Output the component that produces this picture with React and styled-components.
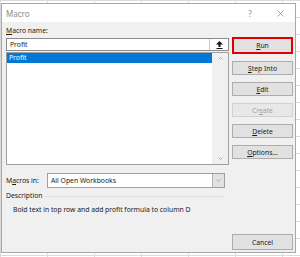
import React from 'react';
import styled, { createGlobalStyle } from 'styled-components';

const GlobalStyle = createGlobalStyle`
  html, body {
    margin: 0;
    padding: 0;
  }
  body {
    width: 300px;
    height: 257px;
    overflow: hidden;
    background-color: #fff;
    background-image:
      linear-gradient(to right, #dadada 1px, transparent 1px),
      linear-gradient(#dadada 1px, transparent 1px);
    background-size: 47px 100%, 100% 17px;
    font-family: "Noto Sans", "Open Sans", sans-serif;
    font-size: 6.8px;
    color: #1a1a1a;
  }
`;

const Page = styled.div`
  padding: 3px 4px 4px 1px;
`;

const Dialog = styled.div`
  width: 295px;
  height: 250px;
  box-sizing: border-box;
  border: 1px solid #a8a8a8;
  background: #f0f0f0;
  display: flex;
  flex-direction: column;
`;

const TitleBar = styled.div`
  height: 18px;
  flex: none;
  background: #fff;
  display: flex;
  align-items: center;
  padding-left: 4px;
`;

const Title = styled.span`
  flex: 1;
  font-size: 8px;
  color: #8c8c8c;
`;

const TitleButton = styled.span`
  width: 30px;
  height: 18px;
  display: flex;
  align-items: center;
  justify-content: center;
  color: #8c8c8c;
  font-size: 8px;
`;

const Content = styled.div`
  flex: 1;
  display: grid;
  grid-template-columns: 223px 61px;
  column-gap: 3px;
  padding: 4px 2px 2px 4px;
`;

const LeftCol = styled.div`
  display: flex;
  flex-direction: column;
`;

const RightCol = styled.div`
  display: flex;
  flex-direction: column;
`;

const Label = styled.div`
  line-height: 10px;
  white-space: nowrap;
`;

const NameBox = styled.div`
  margin-top: 2px;
  height: 13px;
  box-sizing: border-box;
  border: 1px solid #8c8c8c;
  background: #fff;
  display: flex;
`;

const NameText = styled.div`
  flex: 1;
  padding-left: 3px;
  line-height: 11px;
`;

const IconButton = styled.div`
  width: 18px;
  border-left: 1px solid #c8c8c8;
  display: flex;
  align-items: center;
  justify-content: center;
`;

const ListBox = styled.div`
  margin-top: 1px;
  height: 113px;
  box-sizing: border-box;
  border: 1px solid #a0a0a0;
  background: #fff;
  display: flex;
`;

const Items = styled.div`
  flex: 1;
`;

const Item = styled.div`
  height: 10px;
  line-height: 10px;
  padding-left: 2px;
  background: ${(p) => (p.selected ? '#0078d7' : 'transparent')};
  color: ${(p) => (p.selected ? '#fff' : '#000')};
`;

const ScrollBar = styled.div`
  width: 16px;
  background: #f0f0f0;
  display: flex;
  flex-direction: column;
  justify-content: space-between;
  align-items: center;
  padding: 4px 0;
`;

const MacrosRow = styled.div`
  margin-top: 8px;
  display: flex;
  align-items: center;
`;

const RowLabel = styled(Label)`
  width: 41px;
`;

const Select = styled.div`
  width: 178px;
  height: 15px;
  box-sizing: border-box;
  border: 1px solid #a0a0a0;
  background: #fff;
  display: flex;
`;

const SelectText = styled.div`
  flex: 1;
  padding-left: 3px;
  line-height: 13px;
`;

const SelectArrow = styled.div`
  width: 11px;
  background: #e1e1e1;
  border-left: 1px solid #b4b4b4;
  display: flex;
  align-items: center;
  justify-content: center;
`;

const GroupHeader = styled.div`
  margin-top: 3px;
  margin-right: 5px;
  display: flex;
  align-items: center;
  gap: 2px;

  &::after {
    content: '';
    flex: 1;
    border-top: 1px solid #dcdcdc;
  }
`;

const DescText = styled.div`
  margin-top: 4px;
  padding-left: 7px;
  line-height: 10px;
`;

const Button = styled.div`
  height: ${(p) => (p.highlight ? '17px' : '14px')};
  margin-top: ${(p) => (p.highlight ? '11px' : '7px')};
  box-sizing: border-box;
  border: ${(p) => (p.highlight ? '2px solid #e00000' : '1px solid #adadad')};
  background: #e1e1e1;
  display: flex;
  align-items: center;
  justify-content: center;
  color: ${(p) => (p.disabled ? '#a0a0a0' : '#1a1a1a')};
  ${(p) => p.disabled && 'border-color: #d2d2d2; background: #e8e8e8;'}

  u {
    text-decoration-thickness: 0.5px;
    text-underline-offset: 1px;
  }
`;

const CancelButton = styled(Button)`
  margin-top: auto;
  height: 16px;
`;

const Chevron = ({ down }) => (
  <svg width="5" height="3" viewBox="0 0 5 3">
    <path
      d={down ? 'M0.5 0.5 L2.5 2.5 L4.5 0.5' : 'M0.5 2.5 L2.5 0.5 L4.5 2.5'}
      fill="none"
      stroke="#a6a6a6"
      strokeWidth="0.9"
    />
  </svg>
);

const UploadIcon = () => (
  <svg width="7" height="8" viewBox="0 0 7 8">
    <path d="M3.5 0 L7 3.5 L4.5 3.5 L4.5 6 L2.5 6 L2.5 3.5 L0 3.5 Z" fill="#111" />
    <rect x="0.5" y="7" width="6" height="1" fill="#111" />
  </svg>
);

const CloseIcon = () => (
  <svg width="7" height="7" viewBox="0 0 7 7">
    <path d="M0.5 0.5 L6.5 6.5 M6.5 0.5 L0.5 6.5" stroke="#8c8c8c" strokeWidth="0.8" />
  </svg>
);

export default function App() {
  return (
    <Page>
      <GlobalStyle />
      <Dialog>
        <TitleBar>
          <Title>Macro</Title>
          <TitleButton>?</TitleButton>
          <TitleButton>
            <CloseIcon />
          </TitleButton>
        </TitleBar>
        <Content>
          <LeftCol>
            <Label>
              <u>M</u>acro name:
            </Label>
            <NameBox>
              <NameText>Profit</NameText>
              <IconButton>
                <UploadIcon />
              </IconButton>
            </NameBox>
            <ListBox>
              <Items>
                <Item selected>Profit</Item>
              </Items>
              <ScrollBar>
                <Chevron />
                <Chevron down />
              </ScrollBar>
            </ListBox>
            <MacrosRow>
              <RowLabel>
                M<u>a</u>cros in:
              </RowLabel>
              <Select>
                <SelectText>All Open Workbooks</SelectText>
                <SelectArrow>
                  <Chevron down />
                </SelectArrow>
              </Select>
            </MacrosRow>
            <GroupHeader>
              <Label>Description</Label>
            </GroupHeader>
            <DescText>Bold text in top row and add profit formula to column D</DescText>
          </LeftCol>
          <RightCol>
            <Button highlight>
              <span>
                <u>R</u>un
              </span>
            </Button>
            <Button>
              <span>
                <u>S</u>tep Into
              </span>
            </Button>
            <Button>
              <span>
                <u>E</u>dit
              </span>
            </Button>
            <Button disabled>
              <span>
                Cr<u>e</u>ate
              </span>
            </Button>
            <Button>
              <span>
                <u>D</u>elete
              </span>
            </Button>
            <Button>
              <span>
                <u>O</u>ptions...
              </span>
            </Button>
            <CancelButton>Cancel</CancelButton>
          </RightCol>
        </Content>
      </Dialog>
    </Page>
  );
}
